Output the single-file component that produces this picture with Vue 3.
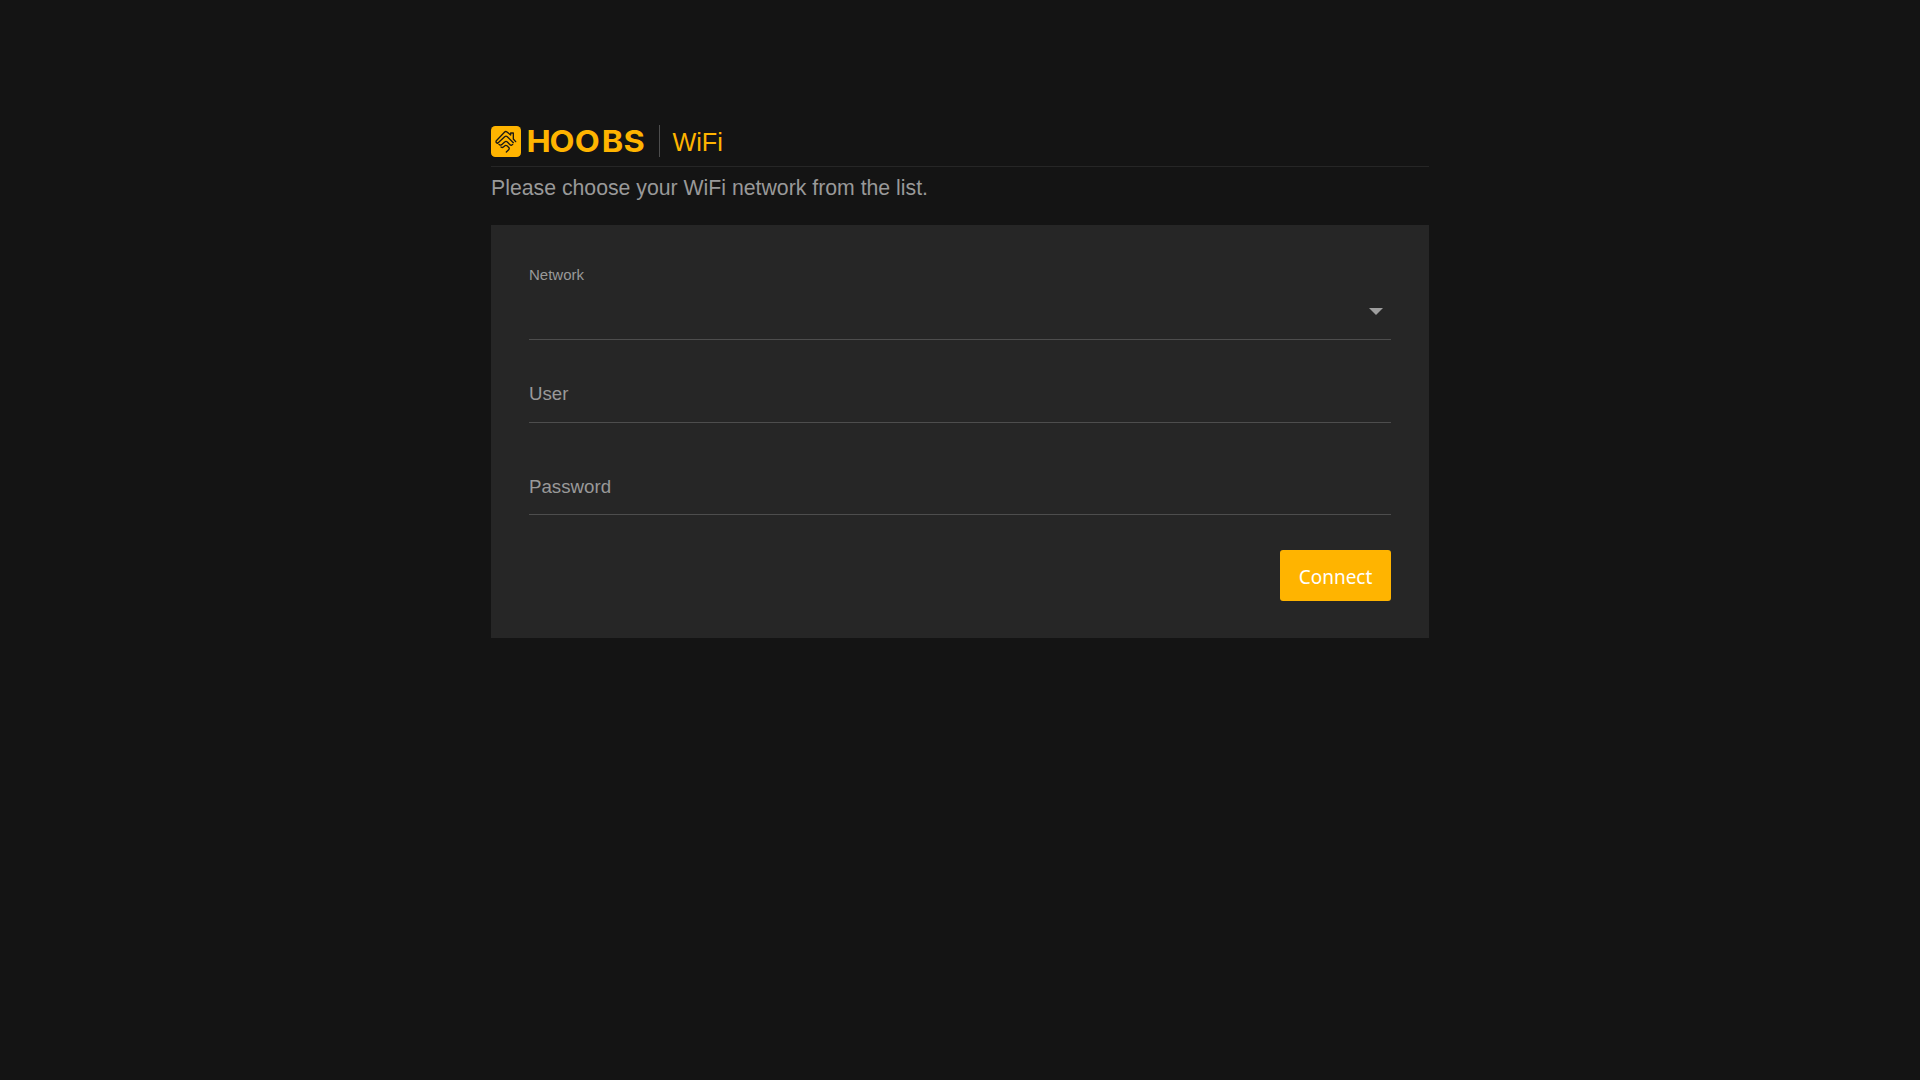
<script setup>
import { ref } from 'vue'

const user = ref('')
const password = ref('')
</script>

<template>
  <main class="page">
    <header class="header">
      <svg class="mark" viewBox="18 18 90 93" aria-hidden="true">
        <rect x="18" y="18" width="90" height="93" rx="13" fill="#ffb400" />
        <g fill="none" stroke="#1c1a14" stroke-width="4" stroke-linecap="round" stroke-linejoin="round">
          <path d="M92 65 L85 57 V39 H77 V45 L66 36 Q62 33 59 36 L34 62 Q31 68 38 70 L59 50 Q63 47 67 50 L85 68" />
          <path d="M83 73 Q79 78 75 74 L67 66 Q63 62 59 66 L50 74 Q45 77 42 73" />
          <path d="M48 81 Q52 84 55 81 L60 77 Q63 75 67 78 L72 83 Q74 86 71 89 L64 96" />
        </g>
      </svg>
      <svg class="wordmark" viewBox="0 0 118 32">
        <text transform="scale(1.1 1)" x="-1.3 19.6 42.5 67 86.8" y="26.3">HOOBS</text>
      </svg>
      <h1 class="title">WiFi</h1>
    </header>
    <p class="intro">Please choose your WiFi network from the list.</p>
    <form class="card" @submit.prevent>
      <div class="field network">
        <span class="small-label">Network</span>
        <svg class="arrow" width="14" height="7" viewBox="0 0 14 7"><path d="M0 0H14L7 7Z" fill="#9e9e9e" /></svg>
      </div>
      <input v-model="user" class="field user" placeholder="User" />
      <input v-model="password" class="field password" type="password" placeholder="Password" />
      <button class="connect" type="submit">Connect</button>
    </form>
  </main>
</template>

<style>
body {
  background: #141414;
}
</style>

<style scoped>
.page {
  box-sizing: border-box;
  width: 938px;
  margin: 0 auto;
  padding-top: 125px;
  font-family: "Liberation Sans", Arial, sans-serif;
  color: #999;
}
.header {
  box-sizing: border-box;
  display: flex;
  height: 42px;
  border-bottom: 1px solid #262626;
}
.mark {
  width: 30px;
  height: 31px;
  margin-top: 1px;
}
.wordmark {
  width: 118px;
  height: 32px;
  margin: 1px 0 0 7px;
  overflow: visible;
}
.wordmark text {
  font: 700 29.5px "Inter", sans-serif;
  fill: #ffb400;
}
.title {
  box-sizing: border-box;
  height: 32px;
  margin: 0 0 0 13px;
  padding-left: 12.5px;
  border-left: 1px solid #4d4d4d;
  font-size: 25.2px;
  font-weight: 400;
  line-height: 34px;
  color: #ffb400;
}
.intro {
  height: 58px;
  margin: 0;
  font-size: 21.25px;
  line-height: 42px;
}
.card {
  box-sizing: border-box;
  display: flex;
  flex-direction: column;
  height: 413px;
  padding: 38px 38px 0;
  background: #262626;
}
.field {
  box-sizing: border-box;
  width: 100%;
  border: 0;
  border-bottom: 1px solid #4d4d4d;
  border-radius: 0;
  padding: 0;
  background: none;
  color: #999;
  outline: none;
  font: 18.7px "Liberation Sans", Arial, sans-serif;
}
.field::placeholder {
  color: #999;
  opacity: 1;
}
.network {
  display: flex;
  justify-content: space-between;
  height: 77px;
}
.small-label {
  font-size: 15px;
  line-height: 24px;
}
.arrow {
  margin: 45px 8px 0 0;
}
.user {
  height: 59px;
  margin-top: 24px;
  padding-top: 2px;
}
.password {
  height: 56px;
  margin-top: 36px;
}
.connect {
  width: 111px;
  height: 51px;
  margin: 35px 0 0;
  padding: 3px 0 0;
  align-self: flex-end;
  border: 0;
  border-radius: 3px;
  background: #ffb400;
  color: #fff;
  font: 19px "Noto Sans", sans-serif;
}
</style>
